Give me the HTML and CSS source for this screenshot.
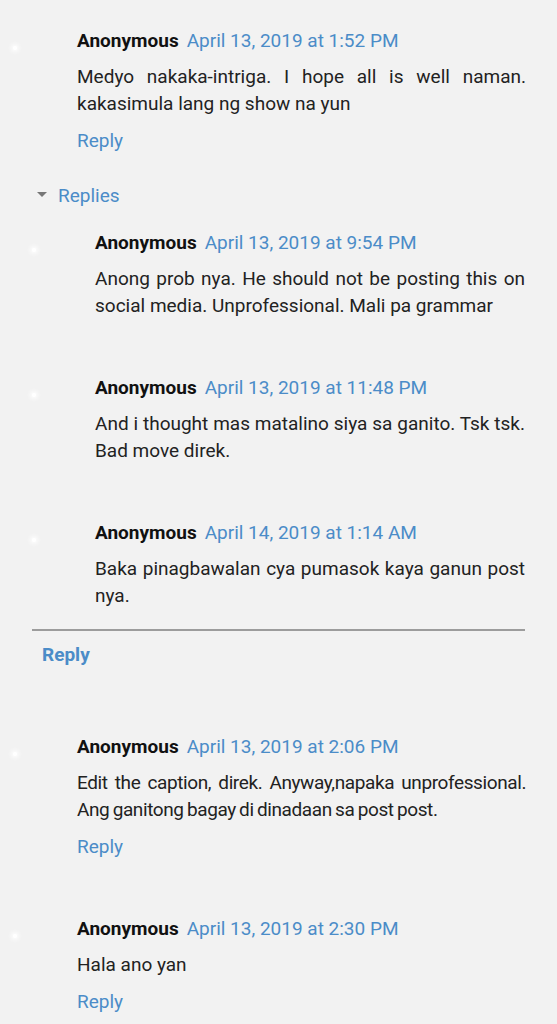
FILE: index.html
```html
<!DOCTYPE html>
<html>
<head>
<meta charset="utf-8">
<link rel="stylesheet" href="styles.css">
</head>
<body>
<div class="thread">
  <div class="comment">
    <div class="avatar"><span class="dot"></span></div>
    <div class="content">
      <div class="head"><span class="author">Anonymous</span><a class="date">April 13, 2019 at 1:52 PM</a></div>
      <p class="body">Medyo nakaka-intriga. I hope all is well naman. kakasimula lang ng show na yun</p>
      <a class="reply">Reply</a>
    </div>
  </div>

  <div class="replies">
    <div class="toggle"><span class="tri"></span><a class="toggle-text">Replies</a></div>
    <div class="comment nested">
      <div class="avatar"><span class="dot"></span></div>
      <div class="content">
        <div class="head"><span class="author">Anonymous</span><a class="date">April 13, 2019 at 9:54 PM</a></div>
        <p class="body">Anong prob nya. He should not be posting this on social media. Unprofessional. Mali pa grammar</p>
      </div>
    </div>
    <div class="comment nested">
      <div class="avatar"><span class="dot"></span></div>
      <div class="content">
        <div class="head"><span class="author">Anonymous</span><a class="date">April 13, 2019 at 11:48 PM</a></div>
        <p class="body">And i thought mas matalino siya sa ganito. Tsk tsk. Bad move direk.</p>
      </div>
    </div>
    <div class="comment nested last">
      <div class="avatar"><span class="dot"></span></div>
      <div class="content">
        <div class="head"><span class="author">Anonymous</span><a class="date">April 14, 2019 at 1:14 AM</a></div>
        <p class="body">Baka pinagbawalan cya pumasok kaya ganun post nya.</p>
      </div>
    </div>
    <div class="thread-reply"><a class="reply-bold">Reply</a></div>
  </div>

  <div class="comment">
    <div class="avatar"><span class="dot"></span></div>
    <div class="content">
      <div class="head"><span class="author">Anonymous</span><a class="date">April 13, 2019 at 2:06 PM</a></div>
      <p class="body tight">Edit the caption, direk. Anyway,napaka unprofessional. Ang ganitong bagay di dinadaan sa post post.</p>
      <a class="reply">Reply</a>
    </div>
  </div>

  <div class="comment">
    <div class="avatar"><span class="dot"></span></div>
    <div class="content">
      <div class="head"><span class="author">Anonymous</span><a class="date">April 13, 2019 at 2:30 PM</a></div>
      <p class="body">Hala ano yan</p>
      <a class="reply">Reply</a>
    </div>
  </div>
</div>
</body>
</html>
```

FILE: styles.css
```css
html, body {
  margin: 0;
  padding: 0;
  background: #f2f2f2;
}
body {
  font-family: Roboto, "Noto Sans", Arial, sans-serif;
  font-size: 19px;
  line-height: 27px;
  color: #222;
}
.thread {
  padding-top: 27px;
}
.comment {
  display: flex;
  margin-bottom: 55px;
}
.avatar {
  flex: none;
  width: 77px;
  display: flex;
  flex-direction: column;
  align-items: flex-start;
}
.dot {
  width: 4px;
  height: 4px;
  margin-top: 19px;
  margin-left: 13px;
  border-radius: 50%;
  background: #fff;
  box-shadow: 0 0 4px 2px rgba(255,255,255,0.9);
}
.content {
  flex: 1;
  min-width: 0;
  padding-right: 31px;
  display: flex;
  flex-direction: column;
  align-items: flex-start;
}
.head {
  display: flex;
  gap: 8px;
  white-space: nowrap;
}
.author {
  font-weight: 700;
  color: #111;
}
.date, .reply, .toggle-text, .reply-bold {
  color: #4b8cc8;
  text-decoration: none;
}
.body {
  margin: 9px 0 0;
  text-align: justify;
  align-self: stretch;
}
.body.tight {
  letter-spacing: -0.4px;
  word-spacing: -1px;
}
.reply {
  margin-top: 10px;
}
.replies {
  margin: -27px 32px 65px 32px;
}
.toggle {
  display: flex;
  align-items: center;
  padding-left: 5px;
  margin-bottom: 20px;
}
.tri {
  width: 0;
  height: 0;
  border-left: 5px solid transparent;
  border-right: 5px solid transparent;
  border-top: 5px solid #777;
  margin-right: 11px;
  margin-top: -2px;
}
.nested {
  margin-bottom: 55px;
}
.nested.last {
  margin-bottom: 20px;
}
.nested .avatar {
  width: 63px;
}
.nested .dot {
  margin-left: 0;
}
.nested .content {
  padding-right: 0;
}
.thread-reply {
  border-top: 2px solid #9c9c9c;
  padding: 10px 0 0 10px;
}
.reply-bold {
  font-weight: 700;
}
```
